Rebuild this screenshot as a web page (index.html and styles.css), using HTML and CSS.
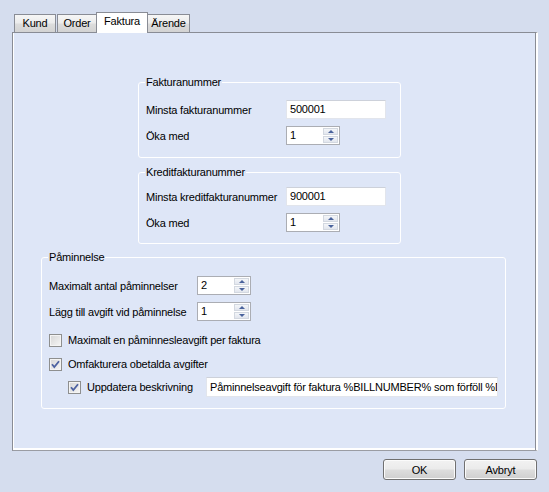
FILE: index.html
```html
<!DOCTYPE html>
<html>
<head>
<meta charset="utf-8">
<link rel="stylesheet" href="styles.css">
</head>
<body>
<div class="dialog">
  <div class="tabs">
    <div class="tab tab-kund">Kund</div>
    <div class="tab tab-order">Order</div>
    <div class="tab tab-active">Faktura</div>
    <div class="tab tab-arende">Ärende</div>
  </div>
  <div class="panel">
    <div class="group group-narrow group-first">
      <div class="group-title title-first">Fakturanummer</div>
      <div class="row"><span class="label label-narrow">Minsta fakturanummer</span><div class="textbox textbox-num">500001</div></div>
      <div class="row row-gap"><span class="label label-narrow">Öka med</span>
        <div class="spinner"><span class="spin-value">1</span><div class="spin-buttons"><span class="spin-btn"><span class="arrow-up"></span></span><span class="spin-btn"><span class="arrow-down"></span></span></div></div>
      </div>
    </div>
    <div class="group group-narrow group-second">
      <div class="group-title title-second">Kreditfakturanummer</div>
      <div class="row"><span class="label label-narrow">Minsta kreditfakturanummer</span><div class="textbox textbox-num">900001</div></div>
      <div class="row row-gap"><span class="label label-narrow">Öka med</span>
        <div class="spinner"><span class="spin-value">1</span><div class="spin-buttons"><span class="spin-btn"><span class="arrow-up"></span></span><span class="spin-btn"><span class="arrow-down"></span></span></div></div>
      </div>
    </div>
    <div class="group group-wide">
      <div class="group-title title-third">Påminnelse</div>
      <div class="row"><span class="label label-wide">Maximalt antal påminnelser</span>
        <div class="spinner"><span class="spin-value">2</span><div class="spin-buttons"><span class="spin-btn"><span class="arrow-up"></span></span><span class="spin-btn"><span class="arrow-down"></span></span></div></div>
      </div>
      <div class="row row-gap"><span class="label label-wide">Lägg till avgift vid påminnelse</span>
        <div class="spinner"><span class="spin-value">1</span><div class="spin-buttons"><span class="spin-btn"><span class="arrow-up"></span></span><span class="spin-btn"><span class="arrow-down"></span></span></div></div>
      </div>
      <div class="check-row check-row-1"><span class="checkbox"></span><span class="check-label">Maximalt en påminnesleavgift per faktura</span></div>
      <div class="check-row check-row-2"><span class="checkbox"><svg class="checkmark" width="11" height="11" viewBox="0 0 11 11"><path d="M2 5.2 L4.3 8 L9 2.2" fill="none" stroke="#4d62a1" stroke-width="1.8"/></svg></span><span class="check-label">Omfakturera obetalda avgifter</span></div>
      <div class="check-row check-row-3"><span class="checkbox"><svg class="checkmark" width="11" height="11" viewBox="0 0 11 11"><path d="M2 5.2 L4.3 8 L9 2.2" fill="none" stroke="#4d62a1" stroke-width="1.8"/></svg></span><span class="check-label label-desc">Uppdatera beskrivning</span><div class="textbox textbox-desc">Påminnelseavgift för faktura %BILLNUMBER% som förföll %DUEDATE%</div></div>
    </div>
  </div>
  <div class="buttons">
    <div class="button">OK</div>
    <div class="button">Avbryt</div>
  </div>
</div>
</body>
</html>
```

FILE: styles.css
```css
html, body {
  margin: 0;
  padding: 0;
}
body {
  background: #d5ddee;
  font-family: "Liberation Sans", Arial, sans-serif;
  font-size: 11px;
  letter-spacing: -0.2px;
  color: #000;
  width: 549px;
  height: 492px;
  overflow: hidden;
}
.dialog {
  display: flex;
  flex-direction: column;
  padding-top: 12px;
}
.tabs {
  display: flex;
  align-items: flex-end;
  height: 20px;
  margin-left: 14px;
}
.tab {
  box-sizing: border-box;
  height: 18px;
  border: 1px solid #898c95;
  border-bottom: none;
  background: linear-gradient(#f6f6f6, #ececec 45%, #dcdcdc 55%, #d3d3d3);
  display: flex;
  justify-content: center;
  padding-top: 2px;
  line-height: 13px;
}
.tab-kund { width: 42px; }
.tab-order { width: 40px; margin-left: 1px; }
.tab-active {
  width: 52px;
  height: 21px;
  margin-left: -1px;
  margin-bottom: -1px;
  background: #fff;
  position: relative;
  z-index: 1;
  padding-top: 2px;
}
.tab-arende { width: 43px; margin-left: -1px; }

.panel {
  box-sizing: border-box;
  margin-left: 12px;
  width: 526px;
  height: 419px;
  background: #dee6f7;
  border-top: 1px solid #898c95;
  border-left: 1px solid #898c95;
  border-right: 2px solid #fff;
  border-bottom: 1px solid #9a9ca3;
  box-shadow: inset 1px 0 0 #fff, inset -1px 0 0 #898c95, inset 0 -2px 0 #fff;
  display: flex;
  flex-direction: column;
  align-items: flex-start;
}
.group {
  box-sizing: border-box;
  border: 1px solid #fff;
  border-radius: 3px;
  display: flex;
  flex-direction: column;
  padding: 0 7px 12px 7px;
}
.group-narrow {
  width: 263px;
  margin-left: 125px;
}
.group-first { margin-top: 49px; }
.group-second { margin-top: 14px; padding-bottom: 11px; }
.group-wide {
  width: 465px;
  margin-left: 28px;
  margin-top: 13px;
  padding-bottom: 11px;
}
.group-title {
  align-self: flex-start;
  margin-top: -7px;
  margin-left: -1px;
  padding: 0 1px;
  background: #dee6f7;
  line-height: 13px;
}
.title-first { margin-bottom: 11px; }
.title-second { margin-bottom: 8px; }
.title-third { margin-bottom: 12px; }

.row {
  display: flex;
  align-items: center;
  height: 19px;
}
.row-gap { margin-top: 7px; }
.label { flex: none; white-space: nowrap; }
.label-narrow { width: 140px; }
.label-wide { width: 148px; }

.textbox {
  box-sizing: border-box;
  height: 19px;
  background: #fff;
  border: 1px solid #e2e5ec;
  border-top-color: #cdd1da;
  padding-left: 3px;
  line-height: 17px;
  white-space: nowrap;
  overflow: hidden;
}
.textbox-num { width: 100px; }
.textbox-desc { width: 296px; height: 20px; line-height: 18px; }

.spinner {
  box-sizing: border-box;
  width: 54px;
  height: 19px;
  background: #fff;
  border: 1px solid #abadb3;
  display: flex;
  align-items: stretch;
}
.spin-value {
  flex: 1;
  padding-left: 3px;
  line-height: 17px;
}
.spin-buttons {
  width: 16px;
  display: flex;
  flex-direction: column;
  padding: 1px 1px 1px 0;
  box-sizing: border-box;
  gap: 1px;
}
.spin-btn {
  flex: 1;
  box-sizing: border-box;
  border: 1px solid #d3d8e0;
  background: linear-gradient(#f4f6f9, #e2e6ee);
  display: flex;
  align-items: center;
  justify-content: center;
}
.arrow-up {
  width: 0;
  height: 0;
  border-left: 3px solid transparent;
  border-right: 3px solid transparent;
  border-bottom: 3px solid #4a639c;
}
.arrow-down {
  width: 0;
  height: 0;
  border-left: 3px solid transparent;
  border-right: 3px solid transparent;
  border-top: 3px solid #4a639c;
}

.check-row {
  display: flex;
  align-items: center;
  height: 13px;
}
.check-row-1 { margin-top: 13px; }
.check-row-2 { margin-top: 11px; }
.check-row-3 { margin-top: 6px; height: 20px; padding-left: 19px; }
.checkbox {
  box-sizing: border-box;
  flex: none;
  width: 13px;
  height: 13px;
  border: 1px solid #8e8f8f;
  background: linear-gradient(135deg, #d6d6d6, #f6f6f6);
  box-shadow: inset 0 0 0 1px #f4f4f4;
  display: flex;
  align-items: center;
  justify-content: center;
  margin-right: 6px;
}
.checkmark { display: block; }
.check-label { white-space: nowrap; line-height: 13px; }
.label-desc { width: 119px; flex: none; }

.buttons {
  display: flex;
  justify-content: flex-end;
  gap: 8px;
  margin-top: 8px;
  padding-right: 12px;
}
.button {
  box-sizing: border-box;
  width: 73px;
  height: 21px;
  border: 1px solid #707070;
  border-radius: 3px;
  background: linear-gradient(#f2f2f2, #ebebeb 48%, #dddddd 52%, #cfcfcf);
  box-shadow: inset 0 0 0 1px #fbfbfb;
  display: flex;
  align-items: center;
  justify-content: center;
}
```
